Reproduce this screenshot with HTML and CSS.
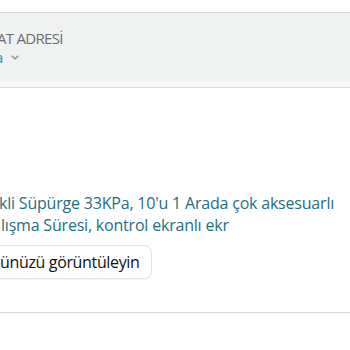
FILE: index.html
```
<!DOCTYPE html>
<html lang="tr">
<head>
<meta charset="utf-8">
<link rel="stylesheet" href="styles.css">
</head>
<body>
<div class="page">
  <div class="address">
    <div class="address-inner">
      <div class="addr-label">AT ADRESİ</div>
      <div class="addr-value"><span class="addr-name">a</span>
        <svg class="chev" width="8" height="5" viewBox="0 0 8 5"><path d="M0.7 0.7 L4 3.8 L7.3 0.7" fill="none" stroke="#8a8f8f" stroke-width="1.3"/></svg>
      </div>
    </div>
    <div class="address-band"></div>
  </div>
  <div class="product">
    <div class="title">kli Süpürge 33KPa, 10'u 1 Arada çok aksesuarlı<br><span class="l2">lışma Süresi, kontrol ekranlı ekr</span></div>
    <div class="btn">ünüzü görüntüleyin</div>
  </div>
  <div class="divider"></div>
</div>
</body>
</html>
```
FILE: styles.css
```
html, body { margin: 0; padding: 0; background: #fff; }
body { font-family: "Open Sans", "DejaVu Sans", sans-serif; overflow: hidden; width: 350px; height: 350px; }
.page { padding-top: 12px; }
.address { border-top: 1px solid #d9dbdb; border-bottom: 1px solid #d5d7d7; background: #f7f8f8; }
.address-inner { background: #f0f1f1; height: 68px; padding-top: 15px; box-sizing: border-box; }
.address-band { height: 6px; }
.addr-label { font-size: 15px; color: #6b6f6f; line-height: 20px; margin-left: -3px; letter-spacing: -0.7px; }
.addr-value { display: flex; align-items: center; gap: 8px; height: 18px; margin-left: -5px; }
.addr-name { color: #3d8f9c; font-size: 15px; }
.chev { margin-top: 1px; }
.product { padding-top: 104px; }
.title { font-size: 16px; line-height: 22px; color: #1f6f7f; margin-left: -1px; white-space: nowrap; letter-spacing: -0.2px; }
.l2 { margin-left: 2px; }
.btn { display: inline-flex; align-items: center; height: 34px; box-sizing: border-box; margin-top: 9px; padding: 0 11px 0 14px; margin-left: -15px; border: 1px solid #e3e5e5; border-radius: 8px; box-shadow: 0 1px 2px rgba(0,0,0,0.06); font-size: 16px; color: #0f1111; letter-spacing: -0.35px; }
.divider { margin-top: 33px; height: 1px; background: #dadcdc; }
```
